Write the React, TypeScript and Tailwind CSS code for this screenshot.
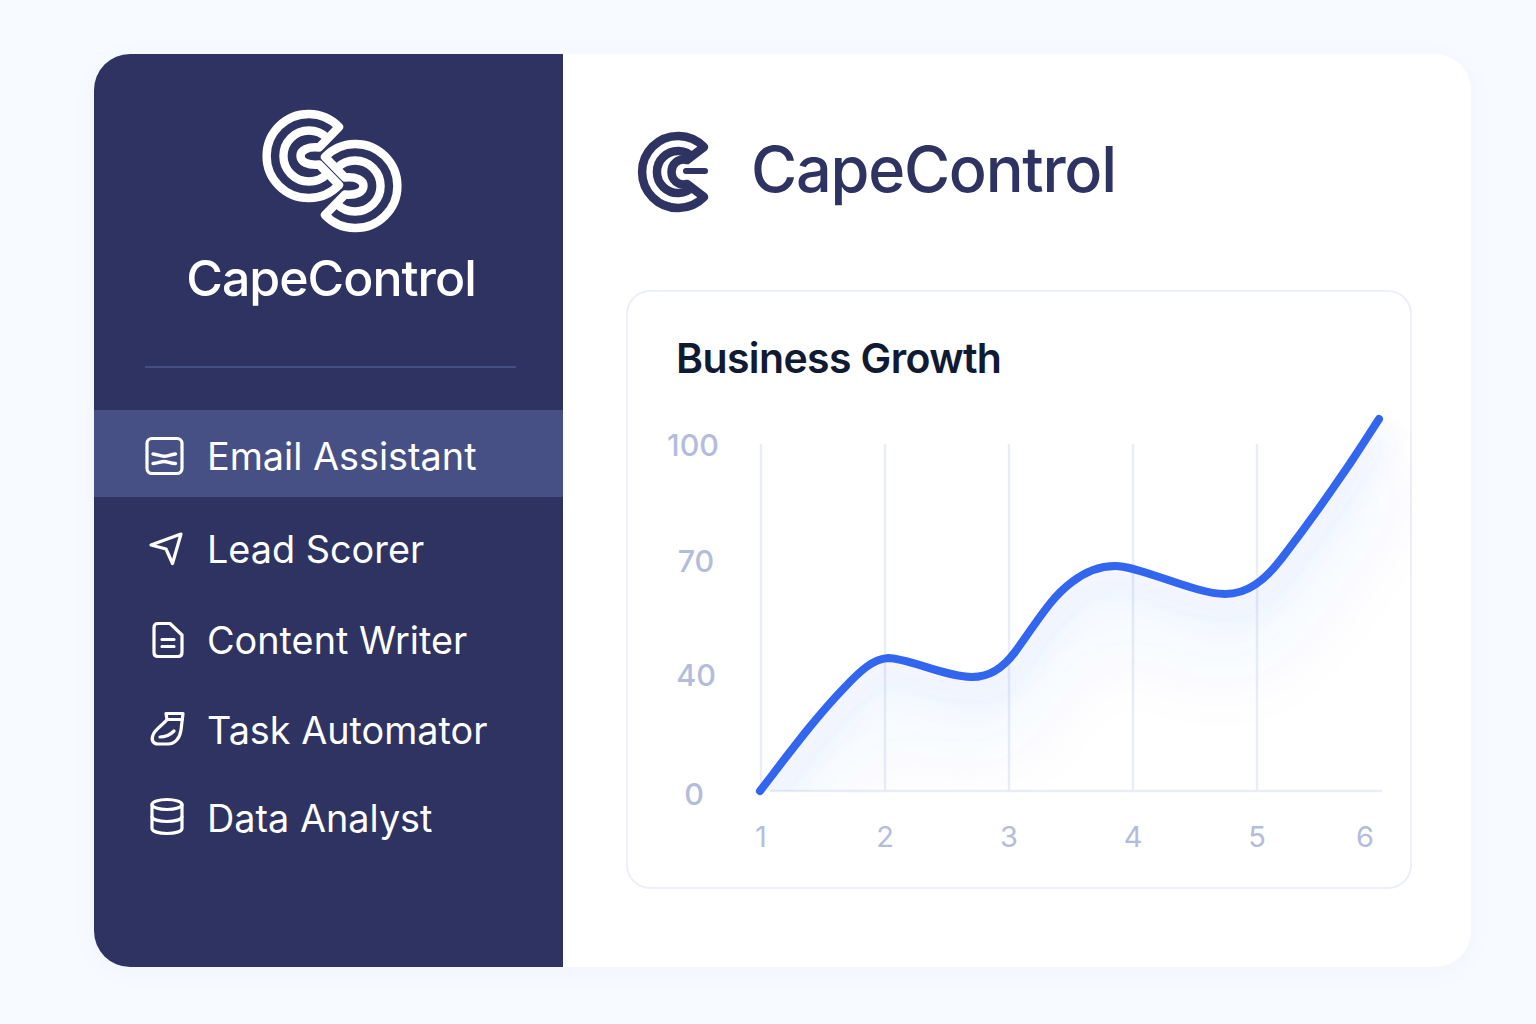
import React from "react";

function BigC() {
  const d =
    "M339 127A42 42 0 1 0 339 185L319 164.500C308 165.500 300.500 162 300.500 156C300.500 150 308 146.500 319 147.500Z" +
    "M327 138A25.500 25.500 0 1 0 327 174";
  return <path d={d} fill="none" stroke="#fff" strokeWidth={8.4} strokeLinejoin="round" />;
}

function SideLogo() {
  return (
    <svg viewBox="255 100 155 140" className="w-[155px] h-[140px] block">
      <BigC />
      <g transform="rotate(180 332 171)">
        <BigC />
      </g>
    </svg>
  );
}

function HeadLogo() {
  const d =
    "M704 147A36 36 0 1 0 704 197L687 184C678 186 671.500 180 671.500 172C671.500 164 678 158 687 160Z" +
    "M693.600 158A21 21 0 1 0 693.600 186";
  return (
    <svg viewBox="632 125 84 94" className="w-[84px] h-[94px] block shrink-0">
      <path d={d} fill="none" stroke="#2e3362" strokeWidth={8.5} strokeLinejoin="round" />
      <path d="M686 171H705" fill="none" stroke="#2e3362" strokeWidth={6} strokeLinecap="round" />
    </svg>
  );
}

const iconCls = "w-[44px] h-[44px] block shrink-0";
const ip = { fill: "none", stroke: "#fff", strokeWidth: 3.2, strokeLinecap: "round" as const, strokeLinejoin: "round" as const };

function MailIcon() {
  return (
    <svg viewBox="142 433 44 44" className={iconCls}>
      <rect x="147" y="437.500" width="35" height="35" rx="5" {...ip} />
      <path d="M153 453C158 453.500 160 455.200 164 455.200C168 455.200 170 453.500 175.500 453" {...ip} strokeWidth={3.4} />
      <path d="M153 462.500C158 462.500 160 460.500 164 460.500C168 460.500 170 462.500 175.500 462.500" {...ip} strokeWidth={3.4} />
    </svg>
  );
}
function SendIcon() {
  return (
    <svg viewBox="144 527 44 44" className={iconCls}>
      <path d="M180 534L150 545L165 549L171.500 563.500Z" {...ip} />
    </svg>
  );
}
function DocIcon() {
  return (
    <svg viewBox="145 618 44 44" className={iconCls}>
      <path d="M158 623.500H170L182 635V652.500C182 655 180.500 656.500 178 656.500H158C155.500 656.500 154 655 154 652.500V627.500C154 625 155.500 623.500 158 623.500Z" {...ip} />
      <path d="M162 639.500H174M162 646.500H174" {...ip} />
    </svg>
  );
}
function TaskIcon() {
  return (
    <svg viewBox="145 708 44 44" className={iconCls}>
      <path d="M166 713.500H183L181 730C180 738 175 744 168 744H158C153 744 151 740 153 735C155 729 163 725 167 719.500Z" {...ip} />
      <path d="M167 719.500H182" {...ip} />
      <path d="M160 737C165 737 170 735 174 731" {...ip} />
    </svg>
  );
}
function DbIcon() {
  return (
    <svg viewBox="145 796 44 44" className={iconCls}>
      <ellipse cx="167" cy="804.500" rx="15" ry="5" {...ip} />
      <path d="M152 804.500V828.500C152 831.500 159 833.500 167 833.500C175 833.500 182 831.500 182 828.500V804.500" {...ip} />
      <path d="M152 816.500C152 819.500 159 821.500 167 821.500C175 821.500 182 819.500 182 816.500" {...ip} />
    </svg>
  );
}

const line =
  "M760 791C790 752 815 718 845 687C860 671 873 659 888 658C908 658 945 677 972 677C990 677 1003 668 1015 652C1035 625 1050 598 1072 582C1085 572 1100 566 1115 566C1140 566 1195 594 1225 594C1248 594 1265 580 1282 558C1315 515 1350 465 1379 419";

function Chart() {
  const xs = [761, 885, 1009, 1133, 1257];
  return (
    <svg viewBox="628 405 784 483" className="w-[784px] h-[483px] block">
      <defs>
        <filter id="bl" x="-10%" y="-20%" width="120%" height="140%">
          <feGaussianBlur stdDeviation="14" />
        </filter>
        <filter id="bl2" x="-10%" y="-30%" width="120%" height="160%">
          <feGaussianBlur stdDeviation="32" />
        </filter>
        <clipPath id="cp">
          <path d={`${line}L1440 419V791H760Z`} />
        </clipPath>
      </defs>
      {xs.map((x) => (
        <line key={x} x1={x} x2={x} y1={444} y2={791} stroke="#e9edf8" strokeWidth={2.5} />
      ))}
      <line x1={770} x2={1382} y1={791} y2={791} stroke="#e9edf8" strokeWidth={2.5} />
      <g clipPath="url(#cp)">
        <path d={line} transform="translate(0 50)" fill="none" stroke="#3366ee" strokeOpacity={0.04} strokeWidth={70} filter="url(#bl2)" />
        <path d={line} transform="translate(0 14)" fill="none" stroke="#3366ee" strokeOpacity={0.08} strokeWidth={24} filter="url(#bl)" />
      </g>
      <path d={line} fill="none" stroke="#3366ee" strokeWidth={8} strokeLinecap="round" />
      <g fill="#b4bcdd" fontSize={30.5} fontWeight={500} textAnchor="middle" fontFamily="Inter, sans-serif">
        <text x={693} y={456}>100</text>
        <text x={696} y={572}>70</text>
        <text x={696} y={686}>40</text>
        <text x={694} y={805}>0</text>
      </g>
      <g fill="#b4bcdd" fontSize={29} fontWeight={400} textAnchor="middle" fontFamily="Inter, sans-serif">
        {[["1", 761], ["2", 885], ["3", 1009], ["4", 1133], ["5", 1257], ["6", 1365]].map(([t, x]) => (
          <text key={t as string} x={x as number} y={847}>{t}</text>
        ))}
      </g>
    </svg>
  );
}

const items: [string, () => React.ReactElement, string, string][] = [
  ["Lead Scorer", SendIcon, "h-[91px] mt-[6px]", "mt-[2px]"],
  ["Content Writer", DocIcon, "h-[92px]", "mt-0"],
  ["Task Automator", TaskIcon, "h-[88px]", "mt-0"],
  ["Data Analyst", DbIcon, "h-[88px]", "mt-0"],
];

export default function App() {
  return (
    <div className="w-[1536px] h-[1024px] bg-[#f7faff] pt-[54px] pl-[94px] font-['Inter',sans-serif] overflow-hidden">
      <div className="w-[1377px] h-[913px] flex rounded-[36px] overflow-hidden bg-white shadow-[0_4px_30px_rgba(60,80,160,0.03)]">
        <aside className="w-[469px] bg-[#2e3362] flex flex-col">
          <div className="pt-[46px] pl-[161px]">
            <SideLogo />
          </div>
          <div className="mt-[9px] text-center pl-[5px] text-white text-[50px] leading-[58px] font-medium tracking-[-0.02em]">CapeControl</div>
          <div className="mt-[59px] ml-[51px] w-[371px] h-[2px] bg-[#454e85]" />
          <nav className="mt-[42px] flex flex-col">
            <div className="h-[87px] pt-[4px] bg-[#475084] flex items-center pl-[48px] gap-[21px] text-white text-[37.8px] font-normal">
              <MailIcon />
              <span className="mt-[2px]">Email Assistant</span>
            </div>
            {items.map(([t, I, h, m]) => (
              <div key={t} className={`${h} flex items-center pl-[51px] gap-[18px] text-white text-[37.8px]`}>
                <I />
                <span className={m}>{t}</span>
              </div>
            ))}
          </nav>
        </aside>
        <main className="flex-1 pl-[63px] flex flex-col">
          <div className="pt-[71px] pl-[6px] flex items-center gap-[35px]">
            <HeadLogo />
            <h1 className="-mt-[6px] text-[63px] leading-[72px] font-medium text-[#2e3362] tracking-[-0.02em]">CapeControl</h1>
          </div>
          <section className="mt-[71px] w-[786px] h-[599px] rounded-[24px] border-2 border-[#eceff9] bg-white flex flex-col">
            <h2 className="pt-[42px] pl-[48px] text-[41px] leading-[48px] font-semibold text-[#111a33] tracking-[-0.015em]">Business Growth</h2>
            <div className="mt-[23px]">
              <Chart />
            </div>
          </section>
        </main>
      </div>
    </div>
  );
}
